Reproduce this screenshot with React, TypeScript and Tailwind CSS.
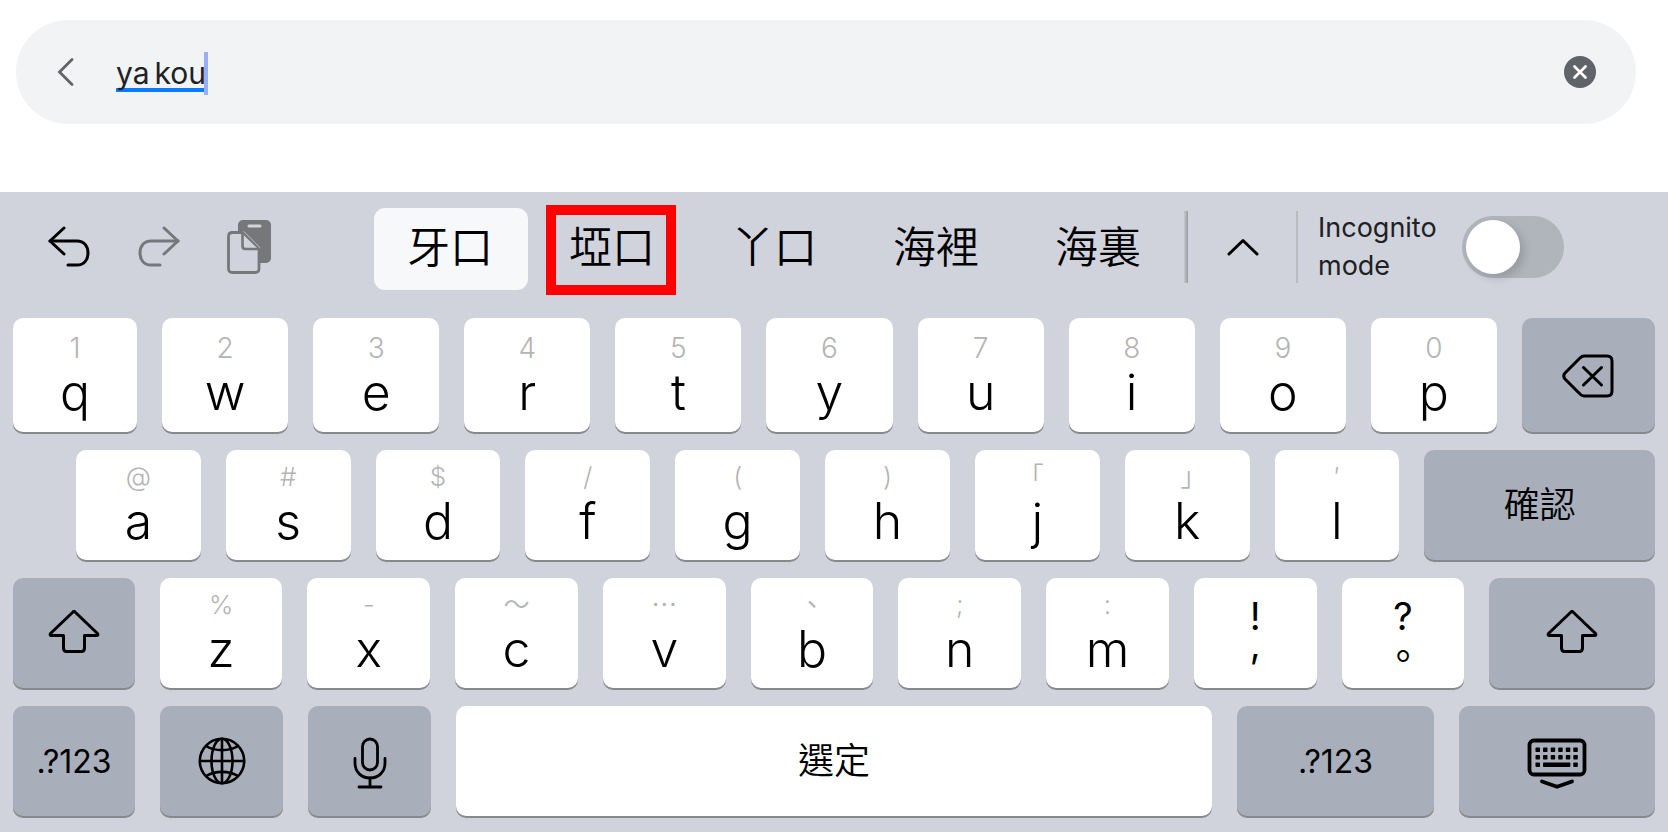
import type { ReactNode } from "react";

type KeyDef = { label: string; hint: string };

const topRow: KeyDef[] = [
    { label: "q", hint: "1" },
    { label: "w", hint: "2" },
    { label: "e", hint: "3" },
    { label: "r", hint: "4" },
    { label: "t", hint: "5" },
    { label: "y", hint: "6" },
    { label: "u", hint: "7" },
    { label: "i", hint: "8" },
    { label: "o", hint: "9" },
    { label: "p", hint: "0" },
];

const homeRow: KeyDef[] = [
    { label: "a", hint: "@" },
    { label: "s", hint: "#" },
    { label: "d", hint: "$" },
    { label: "f", hint: "/" },
    { label: "g", hint: "(" },
    { label: "h", hint: ")" },
    { label: "j", hint: "｢" },
    { label: "k", hint: "｣" },
    { label: "l", hint: "′" },
];

const bottomRow: KeyDef[] = [
    { label: "z", hint: "%" },
    { label: "x", hint: "-" },
    { label: "c", hint: "～" },
    { label: "v", hint: "⋯" },
    { label: "b", hint: "、" },
    { label: "n", hint: ";" },
    { label: "m", hint: ":" },
];

const candidates = ["牙口", "埡口", "丫口", "海裡", "海裏"];

const keyBase = "flex min-w-0 flex-col items-center rounded-[10px] shadow-[0_2px_0_#88898d]";

function LetterKey({ label, hint, className = "", hintSize = "text-[26px]" }: KeyDef & { className?: string; hintSize?: string }) {
    return (
        <button type="button" className={`${keyBase} justify-center bg-white ${className}`}>
            <span className={`h-8 leading-8 font-[350] text-[#b4b4b4] ${hintSize}`}>{hint}</span>
            <span className="text-[50px] leading-[56px] font-[350]">{label}</span>
        </button>
    );
}

function ActionKey({ name, className = "", children }: { name?: string; className?: string; children: ReactNode }) {
    return (
        <button type="button" aria-label={name} className={`${keyBase} justify-center bg-[#a9afba] ${className}`}>
            {children}
        </button>
    );
}

function ShiftIcon() {
    return (
        <svg width="52" height="43" viewBox="0 0 52 43" fill="none" stroke="currentColor" strokeWidth="3" strokeLinejoin="round">
            <path d="M25 2 Q26 1 27 2 L49.500 23.500 Q50.500 25.500 48.500 25.500 H36.500 V38 Q36.500 41.500 33.500 41.500 H18.500 Q15.500 41.500 15.500 38 V25.500 H3.500 Q1.500 25.500 2.500 23.500 Z" />
        </svg>
    );
}

function UndoIcon({ className = "" }: { className?: string }) {
    return (
        <svg width="44" height="44" viewBox="0 0 44 44" fill="none" stroke="currentColor" strokeWidth="3" strokeLinecap="round" strokeLinejoin="round" className={className}>
            <path d="M17 3 L3 16 L17 29" />
            <path d="M3 16 H30 C37 16 41 21 41 28 C41 35 37 40 30 40 H21" />
        </svg>
    );
}

function PasteIcon() {
    return (
        <svg width="44" height="54" viewBox="0 0 44 54" fill="none">
            <rect x="11" y="0" width="33" height="43" rx="5" fill="#76777b" />
            <rect x="20.500" y="4.500" width="14" height="3" rx="1.500" fill="#d0d3dc" />
            <path d="M5.500 12.500 H16 L32 28 V48.500 Q32 52.500 28 52.500 H5.500 Q1.500 52.500 1.500 48.500 V16.500 Q1.500 12.500 5.500 12.500 Z" fill="#d0d3dc" stroke="#76777b" strokeWidth="2.800" strokeLinejoin="round" />
            <path d="M15.500 13 V26 Q15.500 29 18.500 29 H32" fill="none" stroke="#76777b" strokeWidth="2.600" />
            <path d="M16.500 11.200 L33.200 27.800" stroke="#d0d3dc" strokeWidth="0.800" />
        </svg>
    );
}

function BackspaceIcon() {
    return (
        <svg width="52" height="44" viewBox="0 0 52 44" fill="none" stroke="currentColor" strokeWidth="3" strokeLinecap="round" strokeLinejoin="round">
            <path d="M22 2 H45 Q50 2 50 7 V37 Q50 42 45 42 H22 Q20 42 18 40 L3 25 Q0.500 22 3 19 L18 4 Q20 2 22 2 Z" />
            <path d="M21.500 13.500 L39.500 31 M39.500 13.500 L21.500 31" />
        </svg>
    );
}

function GlobeIcon() {
    return (
        <svg width="48" height="48" viewBox="0 0 48 48" fill="none" stroke="currentColor" strokeWidth="2.600">
            <circle cx="24" cy="24" r="22.200" />
            <ellipse cx="24" cy="24" rx="10.500" ry="22.200" />
            <path d="M24 1.500 V46.500 M1.500 24 H46.500" />
            <path d="M8 9 C17 14.500 31 14.500 40 9 M8 39 C17 33.500 31 33.500 40 39" />
        </svg>
    );
}

function MicIcon() {
    return (
        <svg width="34" height="52" viewBox="0 0 34 52" fill="none" stroke="currentColor" strokeWidth="2.800" strokeLinecap="round" className="mt-1">
            <rect x="9.500" y="2" width="15" height="31" rx="7.500" />
            <path d="M2 21.500 V26 C2 35 8.500 41 17 41 C25.500 41 32 35 32 26 V21.500" />
            <path d="M17 41 V50 M6 50 H28" />
        </svg>
    );
}

function KeyboardIcon() {
    const cols = [8.5, 16, 23.7, 31.2, 38.8, 46.3];
    return (
        <svg width="60" height="52" viewBox="0 0 60 52" fill="none" stroke="currentColor" strokeLinecap="round" strokeLinejoin="round" className="mt-1.5">
            <rect x="2.500" y="2.500" width="55" height="34" rx="4.500" strokeWidth="3.800" />
            {cols.map((x) => (
                <g key={x} fill="currentColor" stroke="none">
                    <rect x={x} y="9.500" width="4.500" height="4.500" rx="0.800" />
                    <rect x={x} y="17" width="4.500" height="4.500" rx="0.800" />
                </g>
            ))}
            <g fill="currentColor" stroke="none">
                <rect x="8.500" y="24.500" width="4.500" height="4.500" rx="0.800" />
                <rect x="16" y="24.500" width="27.300" height="4.500" rx="0.800" />
                <rect x="46.300" y="24.500" width="4.500" height="4.500" rx="0.800" />
            </g>
            <path d="M15 43.500 L30 48.800 L45 43.500" strokeWidth="3.800" />
        </svg>
    );
}

function SearchBar() {
    return (
        <header className="pt-5 pr-8 pb-[68px] pl-4">
            <div className="flex h-[104px] items-center rounded-full bg-[#f1f3f5] pr-10 pl-10">
                <button type="button" aria-label="Back" className="text-[#606368]">
                    <svg width="20" height="28" viewBox="0 0 20 28" fill="none" stroke="currentColor" strokeWidth="2.800" strokeLinecap="round">
                        <path d="M16 1.500 L3.500 14 L16 26.500" />
                    </svg>
                </button>
                <div className="ml-10 flex flex-1 items-center pt-0.5">
                    <input
                        type="text"
                        aria-label="Search"
                        defaultValue={"ya\u2006kou"}
                        className="field-sizing-content bg-transparent text-[30px] leading-[44px] text-[#202124] underline decoration-[#0a7aff] decoration-4 underline-offset-4 outline-none [text-decoration-skip-ink:none]"
                    />
                    <span className="-ml-0.5 h-[43px] w-1 bg-[#9aaef5]" />
                </div>
                <button type="button" aria-label="Clear" className="flex size-8 items-center justify-center rounded-full bg-[#606368] text-white">
                    <svg width="14" height="14" viewBox="0 0 14 14" stroke="currentColor" strokeWidth="2.600" strokeLinecap="round">
                        <path d="M1.500 1.500 L12.500 12.500 M12.500 1.500 L1.500 12.500" />
                    </svg>
                </button>
            </div>
        </header>
    );
}

function CandidateBar() {
    return (
        <div className="flex h-[82px]">
            <div className="flex h-[78px] w-[361px] items-center pl-[34px]">
                <button type="button" aria-label="Undo">
                    <UndoIcon />
                </button>
                <button type="button" aria-label="Redo" className="ml-[46px] text-[#76777b]">
                    <UndoIcon className="-scale-x-100" />
                </button>
                <button type="button" aria-label="Paste" className="ml-[46px]">
                    <PasteIcon />
                </button>
            </div>
            <div className="flex gap-2">
                {candidates.map((word, i) => (
                    <button
                        key={word}
                        type="button"
                        className={`relative h-[82px] w-[154px] rounded-[11px] pr-0.5 pb-1 text-[43px] leading-[76px] font-[350] ${i === 0 ? "bg-[#f7f8fa]" : ""}`}
                    >
                        {word}
                        {i === 1 && <span className="absolute -top-[3px] left-2.5 h-[90px] w-[130px] border-10 border-[#ff0000]" />}
                    </button>
                ))}
            </div>
            <div className="ml-2 flex h-[78px] flex-1 items-center">
                <div className="h-[72px] w-1 bg-linear-to-r from-[#c6c9d0] to-[#999b9f]" />
                <button type="button" aria-label="More candidates" className="flex w-[108px] justify-center pl-0.5">
                    <svg width="32" height="18" viewBox="0 0 32 18" fill="none" stroke="currentColor" strokeWidth="3" strokeLinecap="round" strokeLinejoin="round">
                        <path d="M2 16 L16 2.500 L30 16" />
                    </svg>
                </button>
                <div className="h-[72px] w-0.5 bg-[#b9bbc0]" />
                <label htmlFor="incognito" className="ml-5 w-[144px] text-[27px] leading-[38px] text-[#202124]">
                    Incognito mode
                </label>
                <input
                    id="incognito"
                    type="checkbox"
                    role="switch"
                    className="h-[62px] w-[102px] shrink-0 appearance-none rounded-full bg-[#b0b4bb] p-1 before:block before:size-[54px] before:rounded-full before:bg-white before:shadow-[4px_4px_10px_rgba(0,0,0,0.15)]"
                />
            </div>
        </div>
    );
}

export default function App() {
    return (
        <main className="min-h-screen bg-white font-['Inter','Noto_Sans_CJK_TC',sans-serif] text-black">
            <SearchBar />
            <section className="bg-[#d0d3dc] px-[13px] pt-4 pb-3.5">
                <CandidateBar />

                <div className="mt-7 flex flex-col gap-4">
                    <div className="flex h-[116px] gap-[25px] pb-0.5">
                        {topRow.map((key) => (
                            <LetterKey key={key.label} {...key} hintSize="text-[28px]" className="flex-[126] pt-0.5 first:flex-[124]" />
                        ))}
                        <ActionKey name="Backspace" className="flex-[133] pt-0.5">
                            <BackspaceIcon />
                        </ActionKey>
                    </div>

                    <div className="flex h-28 gap-[25px] pb-0.5 pl-[63px]">
                        {homeRow.map((key) => (
                            <LetterKey key={key.label} {...key} className="flex-[125]" />
                        ))}
                        <ActionKey className="flex-[231] text-[36px] font-[350]">確認</ActionKey>
                    </div>

                    <div className="flex h-28 gap-[25px] pb-0.5">
                        <ActionKey name="Shift" className="flex-[122] pb-1">
                            <ShiftIcon />
                        </ActionKey>
                        {bottomRow.map((key) => (
                            <LetterKey key={key.label} {...key} className="flex-[123]" />
                        ))}
                        <button type="button" className={`${keyBase} flex-[123] bg-white pt-6 text-[38px] leading-7`}>
                            <span>
                                !<br />,
                            </span>
                        </button>
                        <button type="button" className={`${keyBase} flex-[123] bg-white pt-[18px] text-[38px] leading-10`}>
                            <span className="text-center">
                                ?<br />。
                            </span>
                        </button>
                        <ActionKey name="Right shift" className="flex-[166] pb-1">
                            <ShiftIcon />
                        </ActionKey>
                    </div>

                    <div className="flex h-28 gap-[25px] pb-0.5">
                        <ActionKey className="flex-[122] pt-0.5 text-[32px]">.?123</ActionKey>
                        <ActionKey name="Next keyboard" className="flex-[123]">
                            <GlobeIcon />
                        </ActionKey>
                        <ActionKey name="Dictate" className="flex-[123]">
                            <MicIcon />
                        </ActionKey>
                        <button type="button" className={`${keyBase} flex-[756] justify-center bg-white text-[36px] font-[350]`}>
                            選定
                        </button>
                        <ActionKey className="flex-[197] pt-0.5 text-[32px]">.?123</ActionKey>
                        <ActionKey name="Hide keyboard" className="flex-[196]">
                            <KeyboardIcon />
                        </ActionKey>
                    </div>
                </div>
            </section>
        </main>
    );
}
